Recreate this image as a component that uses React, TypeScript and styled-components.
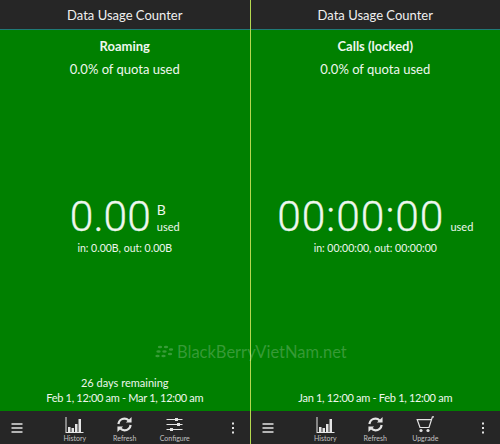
import React from 'react';
import styled, { createGlobalStyle } from 'styled-components';

const GlobalStyle = createGlobalStyle`
  html, body {
    margin: 0;
    padding: 0;
    background: #008000;
  }
  body {
    font-family: Lato, 'Open Sans', sans-serif;
  }
`;

const Screen = styled.div`
  position: relative;
  display: flex;
  width: 500px;
  height: 444px;
  overflow: hidden;
`;

const Pane = styled.div`
  display: flex;
  flex-direction: column;
  flex: 1;
  min-width: 0;
`;

const Divider = styled.div`
  width: 1px;
  background: #b4d84e;
`;

const TitleBar = styled.div`
  display: flex;
  align-items: center;
  justify-content: center;
  height: 29px;
  flex: none;
  background: #262626;
  border-bottom: 1px solid #1f7a78;
  color: #f0f0f0;
  font-size: 13px;
`;

const Body = styled.div`
  display: flex;
  flex-direction: column;
  align-items: center;
  flex: 1;
  background: #008000;
  color: #eef7ee;
  padding: 9px 0 6px;
`;

const Heading = styled.div`
  font-size: 13px;
  font-weight: 700;
  line-height: 15px;
`;

const Quota = styled.div`
  font-size: 13px;
  line-height: 17px;
  margin-top: 7px;
`;

const Centre = styled.div`
  display: flex;
  flex-direction: column;
  align-items: center;
  margin-top: 115px;
`;

const Reading = styled.div`
  display: flex;
  align-items: flex-end;
  gap: 6px;
`;

const BigValue = styled.div<{ $tracking: number }>`
  font-family: Roboto, sans-serif;
  font-size: 42.5px;
  font-weight: 300;
  line-height: 48px;
  letter-spacing: ${(p) => p.$tracking}px;
  -webkit-text-stroke: 0.3px currentColor;
`;

const UnitStack = styled.div`
  display: flex;
  flex-direction: column;
  font-size: 11px;
  line-height: 13px;
  padding-bottom: 8px;
`;

const UnitLetter = styled.span`
  font-size: 14px;
  line-height: 21px;
`;

const Totals = styled.div`
  font-size: 10.5px;
  line-height: 13px;
  margin-top: 1px;
`;

const Footer = styled.div`
  display: flex;
  flex-direction: column;
  align-items: center;
  margin-top: auto;
  font-size: 11px;
  line-height: 15px;
`;

const Period = styled.span`
  letter-spacing: -0.3px;
`;

const BottomBar = styled.div`
  display: flex;
  height: 33px;
  flex: none;
  background: #262626;
  color: #e4e4e4;
`;

const BarSlot = styled.div`
  display: flex;
  align-items: center;
  justify-content: center;
  width: 34px;
`;

const Actions = styled.div`
  display: flex;
  flex: 1;
  justify-content: center;
`;

const Action = styled.div`
  display: flex;
  flex-direction: column;
  align-items: center;
  width: 50px;
  padding-top: 5px;
`;

const ActionIcon = styled.div`
  display: flex;
  align-items: center;
  justify-content: center;
  height: 17px;
`;

const ActionLabel = styled.span`
  font-size: 7px;
  line-height: 9px;
  margin-top: 1px;
  color: #c4c4c4;
`;

const Watermark = styled.div`
  position: absolute;
  left: 155px;
  top: 343px;
  display: flex;
  align-items: center;
  gap: 3px;
  color: rgba(255, 255, 255, 0.22);
  font-size: 16.5px;
  line-height: 18px;
`;

function MenuIcon() {
  return (
    <svg width="14" height="12" viewBox="0 0 14 12" fill="none" stroke="currentColor" strokeWidth="1.3">
      <path d="M1.5 2h11M1.5 6h11M1.5 10h11" />
    </svg>
  );
}

function MoreIcon() {
  return (
    <svg width="4" height="12" viewBox="0 0 4 12" fill="currentColor">
      <rect x="1" y="0.5" width="2" height="2" />
      <rect x="1" y="5" width="2" height="2" />
      <rect x="1" y="9.5" width="2" height="2" />
    </svg>
  );
}

function HistoryIcon() {
  return (
    <svg width="19" height="16" viewBox="0 0 19 16" fill="currentColor">
      <rect x="0.5" y="0" width="1" height="15" />
      <rect x="3" y="10" width="2.5" height="5" />
      <rect x="6.5" y="11" width="2.5" height="4" />
      <rect x="10" y="7" width="2.5" height="8" />
      <rect x="13.5" y="2" width="2.5" height="13" />
      <rect x="0.5" y="15" width="18" height="1" />
    </svg>
  );
}

function RefreshIcon() {
  return (
    <svg width="17" height="17" viewBox="0 0 18 18" fill="none" stroke="currentColor" strokeWidth="2.4">
      <path d="M2.5 8.5C3 5 5.8 2.8 9 2.8c1.8 0 3.2.7 4.4 1.9" />
      <path d="M15.5 9.5c-.5 3.5-3.3 5.7-6.5 5.7-1.8 0-3.2-.7-4.4-1.9" />
      <path d="M16.5 1v6h-6z" fill="currentColor" stroke="none" />
      <path d="M1.5 17v-6h6z" fill="currentColor" stroke="none" />
    </svg>
  );
}

function ConfigureIcon() {
  return (
    <svg width="17" height="15" viewBox="0 0 17 15" fill="none" stroke="currentColor" strokeWidth="1">
      <path d="M0.5 2.5h16M0.5 7.5h16M0.5 12.5h16" />
      <rect x="9" y="1" width="3" height="3" fill="currentColor" stroke="none" />
      <rect x="11" y="6" width="3" height="3" fill="currentColor" stroke="none" />
      <rect x="4" y="11" width="3" height="3" fill="currentColor" stroke="none" />
    </svg>
  );
}

function CartIcon() {
  return (
    <svg width="20" height="17" viewBox="0 0 20 17" fill="none" stroke="currentColor" strokeWidth="1.2">
      <path d="M19 .8h-1.6L14 11.5H5L2.2 3.7h14" />
      <circle cx="6" cy="14.5" r="1.6" fill="currentColor" stroke="none" />
      <circle cx="13" cy="14.5" r="1.6" fill="currentColor" stroke="none" />
    </svg>
  );
}

function BerryLogo() {
  return (
    <svg width="19" height="14" viewBox="0 0 19 14" fill="currentColor">
      <ellipse cx="5" cy="2" rx="2.2" ry="1.3" />
      <ellipse cx="11" cy="2" rx="2.2" ry="1.3" />
      <ellipse cx="3.5" cy="6.5" rx="2.2" ry="1.3" />
      <ellipse cx="9.5" cy="6.5" rx="2.2" ry="1.3" />
      <ellipse cx="2.5" cy="11" rx="2.2" ry="1.3" />
      <ellipse cx="8.5" cy="11" rx="2.2" ry="1.3" />
      <ellipse cx="16" cy="4.5" rx="2.2" ry="1.3" />
      <ellipse cx="15" cy="9" rx="2.2" ry="1.3" />
    </svg>
  );
}

type PanelProps = {
  heading: string;
  value: string;
  tracking: number;
  unit?: string;
  totals: string;
  remaining?: string;
  period: string;
  lastAction: { label: string; icon: React.ReactNode };
};

function Panel({ heading, value, tracking, unit, totals, remaining, period, lastAction }: PanelProps) {
  return (
    <Pane>
      <TitleBar>Data Usage Counter</TitleBar>
      <Body>
        <Heading>{heading}</Heading>
        <Quota>0.0% of quota used</Quota>
        <Centre>
          <Reading>
            <BigValue $tracking={tracking}>{value}</BigValue>
            <UnitStack>
              {unit && <UnitLetter>{unit}</UnitLetter>}
              <span>used</span>
            </UnitStack>
          </Reading>
          <Totals>{totals}</Totals>
        </Centre>
        <Footer>
          {remaining && <span>{remaining}</span>}
          <Period>{period}</Period>
        </Footer>
      </Body>
      <BottomBar>
        <BarSlot><MenuIcon /></BarSlot>
        <Actions>
          <Action><ActionIcon><HistoryIcon /></ActionIcon><ActionLabel>History</ActionLabel></Action>
          <Action><ActionIcon><RefreshIcon /></ActionIcon><ActionLabel>Refresh</ActionLabel></Action>
          <Action><ActionIcon>{lastAction.icon}</ActionIcon><ActionLabel>{lastAction.label}</ActionLabel></Action>
        </Actions>
        <BarSlot><MoreIcon /></BarSlot>
      </BottomBar>
    </Pane>
  );
}

export default function App() {
  return (
    <Screen>
      <GlobalStyle />
      <Panel
        heading="Roaming"
        value="0.00"
        tracking={0}
        unit="B"
        totals="in: 0.00B, out: 0.00B"
        remaining="26 days remaining"
        period="Feb 1, 12:00 am - Mar 1, 12:00 am"
        lastAction={{ label: 'Configure', icon: <ConfigureIcon /> }}
      />
      <Divider />
      <Panel
        heading="Calls (locked)"
        value="00:00:00"
        tracking={1}
        totals="in: 00:00:00, out: 00:00:00"
        period="Jan 1, 12:00 am - Feb 1, 12:00 am"
        lastAction={{ label: 'Upgrade', icon: <CartIcon /> }}
      />
      <Watermark><BerryLogo />BlackBerryVietNam.net</Watermark>
    </Screen>
  );
}
